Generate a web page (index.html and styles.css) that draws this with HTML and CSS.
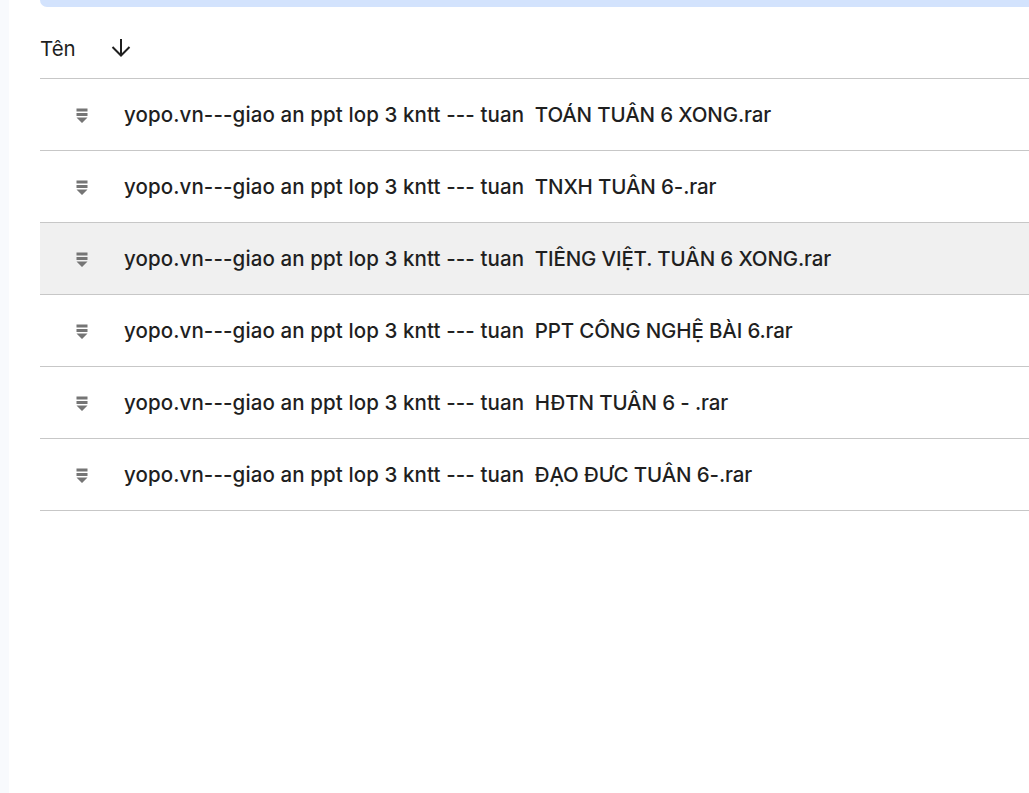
FILE: index.html
```html
<!DOCTYPE html>
<html lang="en">
<head>
    <meta charset="UTF-8">
    <meta name="viewport" content="width=device-width, initial-scale=1.0">
    <title>Drive</title>
    <link rel="stylesheet" href="styles.css">
</head>
<body>
    <div class="page">
        <div class="top-bar"></div>

        <div class="list-head">
            <span class="head-name">Tên</span>
            <svg class="sort-icon" width="24" height="24" viewBox="0 0 24 24"><path d="M12 3v16M3.500 11l8.500 8.500 8.500-8.500" fill="none" stroke="#1f1f1f" stroke-width="2"/></svg>
        </div>

        <div class="file-row">
            <svg class="file-icon" width="16" height="18" viewBox="0 0 16 18"><path d="M2.500 2.500h11v3h-11zM2.500 7h11v3h-11zM2.500 11.500h11L8 17z" fill="#757575"/></svg>
            <span class="file-name"><span class="file-prefix">yopo.vn---giao an ppt lop 3 kntt --- tuan</span>  TOÁN TUÂN 6 XONG.rar</span>
        </div>
        <div class="file-row">
            <svg class="file-icon" width="16" height="18" viewBox="0 0 16 18"><path d="M2.500 2.500h11v3h-11zM2.500 7h11v3h-11zM2.500 11.500h11L8 17z" fill="#757575"/></svg>
            <span class="file-name"><span class="file-prefix">yopo.vn---giao an ppt lop 3 kntt --- tuan</span>  TNXH TUÂN 6-.rar</span>
        </div>
        <div class="file-row hovered">
            <svg class="file-icon" width="16" height="18" viewBox="0 0 16 18"><path d="M2.500 2.500h11v3h-11zM2.500 7h11v3h-11zM2.500 11.500h11L8 17z" fill="#757575"/></svg>
            <span class="file-name"><span class="file-prefix">yopo.vn---giao an ppt lop 3 kntt --- tuan</span>  TIÊNG VIỆT. TUÂN 6 XONG.rar</span>
        </div>
        <div class="file-row">
            <svg class="file-icon" width="16" height="18" viewBox="0 0 16 18"><path d="M2.500 2.500h11v3h-11zM2.500 7h11v3h-11zM2.500 11.500h11L8 17z" fill="#757575"/></svg>
            <span class="file-name"><span class="file-prefix">yopo.vn---giao an ppt lop 3 kntt --- tuan</span>  PPT CÔNG NGHỆ BÀI 6.rar</span>
        </div>
        <div class="file-row">
            <svg class="file-icon" width="16" height="18" viewBox="0 0 16 18"><path d="M2.500 2.500h11v3h-11zM2.500 7h11v3h-11zM2.500 11.500h11L8 17z" fill="#757575"/></svg>
            <span class="file-name"><span class="file-prefix">yopo.vn---giao an ppt lop 3 kntt --- tuan</span>  HĐTN TUÂN 6 - .rar</span>
        </div>
        <div class="file-row">
            <svg class="file-icon" width="16" height="18" viewBox="0 0 16 18"><path d="M2.500 2.500h11v3h-11zM2.500 7h11v3h-11zM2.500 11.500h11L8 17z" fill="#757575"/></svg>
            <span class="file-name"><span class="file-prefix">yopo.vn---giao an ppt lop 3 kntt --- tuan</span>  ĐẠO ĐƯC TUÂN 6-.rar</span>
        </div>
    </div>
</body>
</html>
```

FILE: styles.css
```css
html, body {
    height: 100%;
}
body {
    margin: 0;
    background-color: #f8fafd;
    font-family: Inter, Arial, sans-serif;
    color: #1f1f1f;
    overflow: hidden;
}
.page {
    margin-left: 9px;
    padding-left: 31px;
    height: 100%;
    background-color: #fff;
}
.top-bar {
    height: 7px;
    background-color: #d3e3fd;
    border-bottom-left-radius: 12px;
}
.list-head {
    box-sizing: border-box;
    display: flex;
    align-items: center;
    height: 72px;
    padding-top: 11px;
    border-bottom: 1px solid #c7c7c7;
}
.head-name {
    width: 69px;
    font-size: 20.500px;
}
.sort-icon {
    display: block;
}
.file-row {
    display: flex;
    align-items: center;
    height: 71px;
    border-bottom: 1px solid #c7c7c7;
}
.file-row.hovered {
    background-color: #f0f0f0;
}
.file-icon {
    display: block;
    margin-left: 34px;
    margin-right: 34px;
}
.file-name {
    font-size: 20.500px;
    font-weight: 450;
    letter-spacing: -0.140px;
    white-space: pre;
}
.file-prefix {
    letter-spacing: 0.100px;
}
```
